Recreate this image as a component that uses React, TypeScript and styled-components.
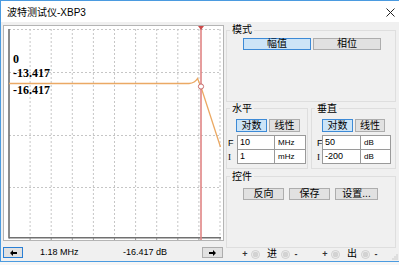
import React from "react";
import styled, { createGlobalStyle } from "styled-components";

const FONT = `"Liberation Sans", "Noto Sans CJK SC", sans-serif`;

const GlobalStyle = createGlobalStyle`
  html, body { margin: 0; padding: 0; background: #f6f6f6; }
  body { width: 399px; height: 265px; overflow: hidden; font-family: ${FONT}; color: #000; }
  * { box-sizing: border-box; }
`;

const Window = styled.div`
  position: relative;
  width: 399px;
  height: 262px;
  border: 1px solid #4b9be0;
  border-right: none;
  background: #f0f0f0;
  display: flex;
  flex-direction: column;
`;

const TitleBar = styled.div`
  height: 21px;
  background: #fff;
  display: flex;
  align-items: center;
  justify-content: space-between;
  padding: 2px 4px 0 6px;
`;

const Title = styled.span`
  font-size: 10px;
  line-height: 12px;
`;

const Body = styled.div`
  flex: 1;
  display: flex;
`;

const LeftCol = styled.div`
  width: 225px;
  padding-left: 2px;
  display: flex;
  flex-direction: column;
`;

const GraphFrame = styled.div`
  margin-top: 3px;
  width: 221px;
  height: 216px;
  border: 1px solid #b4b4b4;
  background: #fff;
  overflow: hidden;
`;

const BottomBar = styled.div`
  margin-top: 5px;
  width: 220px;
  height: 13px;
  display: grid;
  grid-template-columns: 20px 90px 1fr 21px;
  align-items: center;
`;

const ArrowButton = styled.div<{ $focused?: boolean }>`
  height: 11px;
  border: 1px solid ${(p) => (p.$focused ? "#2a7fd4" : "#adadad")};
  background: #e1e1e1;
  display: flex;
  align-items: center;
  justify-content: center;
`;

const Readout = styled.span<{ $pad: number }>`
  padding-left: ${(p) => p.$pad}px;
  font-size: 9px;
  line-height: 13px;
  white-space: nowrap;
`;

const RightCol = styled.div`
  flex: 1;
  padding-right: 3px;
  display: flex;
  flex-direction: column;
`;

const Group = styled.fieldset<{ $mt: number; $w?: number }>`
  margin: ${(p) => p.$mt}px 0 0 0;
  padding: 0;
  min-width: 0;
  border: 1px solid #dedede;
  ${(p) => (p.$w ? `width: ${p.$w}px;` : "flex: 1;")}
`;

const Legend = styled.legend`
  margin-left: 3px;
  padding: 0 2px;
  font-size: 10px;
  line-height: 12px;
`;

const ButtonRow = styled.div<{ $pad: number; $top: number; $bottom: number; $gap: number }>`
  display: flex;
  gap: ${(p) => p.$gap}px;
  padding: ${(p) => p.$top}px 0 ${(p) => p.$bottom}px ${(p) => p.$pad}px;
`;

const Toggle = styled.div<{ $on?: boolean; $w: number; $h: number }>`
  width: ${(p) => p.$w}px;
  height: ${(p) => p.$h}px;
  border: 1px solid ${(p) => (p.$on ? "#3d8ad6" : "#adadad")};
  background: ${(p) => (p.$on ? "#cce4f7" : "#e1e1e1")};
  font-size: 10px;
  line-height: ${(p) => p.$h - 2}px;
  text-align: center;
  white-space: nowrap;
`;

const AxisRow = styled.div`
  display: flex;
  gap: 3px;
`;

const InputBlock = styled.div<{ $pad: number; $labelW: number }>`
  display: flex;
  align-items: flex-start;
  padding: 3px 0 4px ${(p) => p.$pad}px;
`;

const RowLabels = styled.div<{ $w: number }>`
  width: ${(p) => p.$w}px;
  display: grid;
  grid-template-rows: 14px 14px;
  padding-top: 1px;
`;

const RowLabel = styled.span<{ $serif?: boolean }>`
  font-family: ${(p) => (p.$serif ? `"Liberation Serif", serif` : FONT)};
  font-size: 9px;
  line-height: 14px;
`;

const FieldGrid = styled.div<{ $c1: number; $c2: number }>`
  display: grid;
  grid-template-columns: ${(p) => p.$c1}px ${(p) => p.$c2}px;
  grid-template-rows: 13px 13px;
  gap: 1px;
  border: 1px solid #9a9a9a;
  background: #9a9a9a;
`;

const Cell = styled.div<{ $unit?: boolean }>`
  background: #fff;
  padding-left: ${(p) => (p.$unit ? 3 : 2)}px;
  font-size: ${(p) => (p.$unit ? 8 : 9)}px;
  line-height: 13px;
  white-space: nowrap;
`;

const TermRow = styled.div`
  margin-top: auto;
  margin-bottom: 1px;
  height: 12px;
  display: flex;
  gap: 23px;
  padding-left: 16px;
`;

const TermGroup = styled.div`
  display: flex;
  align-items: center;
  gap: 3px;
`;

const Sign = styled.span`
  width: 6px;
  text-align: center;
  font-size: 9px;
  font-weight: bold;
  color: #333;
  line-height: 12px;
`;

const Jack = styled.span`
  width: 9px;
  height: 9px;
  border-radius: 50%;
  border: 1px solid #cdcdcd;
  background: radial-gradient(circle, #d2d2d2 0 2.6px, #f5f5f5 3.2px);
`;

const TermChar = styled.span`
  margin: 0 1px 0 4px;
  font-size: 10px;
  line-height: 12px;
`;

const Grip = styled.svg`
  position: absolute;
  right: 1px;
  bottom: 1px;
`;

const vLines = Array.from({ length: 10 }, (_, i) => 9 + (i + 1) * 21.1);
const hLines = [29.5, 72.5, 135.5, 187.5];

const BodePlot = () => (
  <svg width={219} height={214}>
    <g transform="translate(-4,-26)">
      {hLines.map((y) => (
        <line key={y} x1={9} x2={221} y1={y} y2={y} stroke="#c6c6c6" strokeDasharray="2 2" />
      ))}
      {vLines.map((x) => (
        <line key={x} x1={x} x2={x} y1={29} y2={237} stroke="#c6c6c6" strokeDasharray="2 2" />
      ))}
      {vLines.map((x) => (
        <line key={`t${x}`} x1={x} x2={x} y1={238} y2={241} stroke="#9a9a9a" />
      ))}
      <line x1={9} x2={9} y1={29} y2={238.5} stroke="#707070" strokeWidth={1.6} />
      <line x1={9} x2={221} y1={237.8} y2={237.8} stroke="#707070" strokeWidth={1.6} />
      <path
        d="M9 83.5 L189 83.5 Q195 83 197.5 78.5 L201 87 L220.5 147"
        fill="none"
        stroke="#eba964"
        strokeWidth={1.3}
      />
      <line x1={201} x2={201} y1={26} y2={241} stroke="#e08585" strokeWidth={1.6} />
      <polygon points="198,26 204,26 201,30" fill="#cc4a4a" />
      <circle cx={201} cy={86.5} r={2.6} fill="#fff" stroke="#c86a6a" strokeWidth={1} />
      <g fontFamily={`"Liberation Serif", serif`} fontWeight="bold" fontSize={12} fill="#000">
        <text x={13} y={63}>0</text>
        <text x={13} y={77}>-13.417</text>
        <text x={13} y={94}>-16.417</text>
      </g>
    </g>
  </svg>
);

const Arrow = ({ dir }: { dir: "left" | "right" }) => (
  <svg width={7} height={6} viewBox="0 0 7 6">
    <path
      d="M0 3 L3 0 L3 2 L7 2 L7 4 L3 4 L3 6 Z"
      fill="#000"
      transform={dir === "right" ? "translate(7,0) scale(-1,1)" : undefined}
    />
  </svg>
);

const Terminal = ({ label }: { label: string }) => (
  <TermGroup>
    <Sign>+</Sign>
    <Jack />
    <TermChar>{label}</TermChar>
    <Jack />
    <Sign>-</Sign>
  </TermGroup>
);

export default function App() {
  return (
    <>
      <GlobalStyle />
      <Window>
        <TitleBar>
          <Title>波特测试仪-XBP3</Title>
          <svg width={9} height={9} viewBox="0 0 9 9">
            <path d="M0.5 0.5 L8.5 8.5 M8.5 0.5 L0.5 8.5" stroke="#222" strokeWidth={1} />
          </svg>
        </TitleBar>
        <Body>
          <LeftCol>
            <GraphFrame>
              <BodePlot />
            </GraphFrame>
            <BottomBar>
              <ArrowButton $focused>
                <Arrow dir="left" />
              </ArrowButton>
              <Readout $pad={17}>1.18 MHz</Readout>
              <Readout $pad={10}>-16.417 dB</Readout>
              <ArrowButton>
                <Arrow dir="right" />
              </ArrowButton>
            </BottomBar>
          </LeftCol>
          <RightCol>
            <Group $mt={2}>
              <Legend>模式</Legend>
              <ButtonRow $pad={16} $top={2} $bottom={3} $gap={2}>
                <Toggle $on $w={68} $h={12}>幅值</Toggle>
                <Toggle $w={68} $h={12}>相位</Toggle>
              </ButtonRow>
            </Group>
            <AxisRow>
              <Group $mt={1} $w={82}>
                <Legend>水平</Legend>
                <ButtonRow $pad={9} $top={4} $bottom={0} $gap={2}>
                  <Toggle $on $w={31} $h={13}>对数</Toggle>
                  <Toggle $w={31} $h={13}>线性</Toggle>
                </ButtonRow>
                <InputBlock $pad={1} $labelW={9}>
                  <RowLabels $w={9}>
                    <RowLabel>F</RowLabel>
                    <RowLabel $serif>I</RowLabel>
                  </RowLabels>
                  <FieldGrid $c1={36} $c2={30}>
                    <Cell>10</Cell>
                    <Cell $unit>MHz</Cell>
                    <Cell>1</Cell>
                    <Cell $unit>mHz</Cell>
                  </FieldGrid>
                </InputBlock>
              </Group>
              <Group $mt={1}>
                <Legend>垂直</Legend>
                <ButtonRow $pad={10} $top={4} $bottom={0} $gap={2}>
                  <Toggle $on $w={31} $h={13}>对数</Toggle>
                  <Toggle $w={30} $h={13}>线性</Toggle>
                </ButtonRow>
                <InputBlock $pad={5} $labelW={5}>
                  <RowLabels $w={5}>
                    <RowLabel>F</RowLabel>
                    <RowLabel $serif>I</RowLabel>
                  </RowLabels>
                  <FieldGrid $c1={37} $c2={29}>
                    <Cell>50</Cell>
                    <Cell $unit>dB</Cell>
                    <Cell>-200</Cell>
                    <Cell $unit>dB</Cell>
                  </FieldGrid>
                </InputBlock>
              </Group>
            </AxisRow>
            <Group $mt={2}>
              <Legend>控件</Legend>
              <ButtonRow $pad={16} $top={5} $bottom={5} $gap={5}>
                <Toggle $w={41} $h={12}>反向</Toggle>
                <Toggle $w={41} $h={12}>保存</Toggle>
                <Toggle $w={43} $h={12}>设置...</Toggle>
              </ButtonRow>
            </Group>
            <TermRow>
              <Terminal label="进" />
              <Terminal label="出" />
            </TermRow>
          </RightCol>
        </Body>
        <Grip width={6} height={6} viewBox="0 0 6 6">
          {[
            [5, 1],
            [5, 3],
            [3, 3],
            [5, 5],
            [3, 5],
            [1, 5],
          ].map(([x, y]) => (
            <rect key={`${x}-${y}`} x={x - 0.5} y={y - 0.5} width={1} height={1} fill="#a8a8a8" />
          ))}
        </Grip>
      </Window>
    </>
  );
}
